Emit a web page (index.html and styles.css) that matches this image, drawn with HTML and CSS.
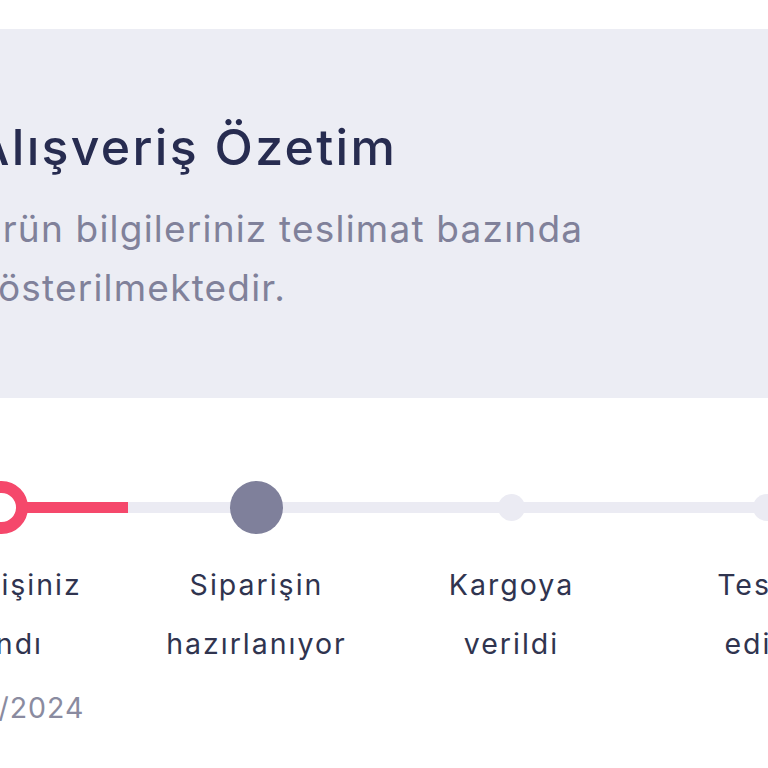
FILE: index.html
```html
<!DOCTYPE html>
<html lang="tr">
<head>
<meta charset="utf-8">
<title>Alışveriş Özetim</title>
<link rel="stylesheet" href="styles.css">
</head>
<body>
<div class="page">
  <div class="topbar"></div>
  <section class="summary">
    <div class="summary-inner">
      <h1 class="title">Alışveriş Özetim</h1>
      <p class="subtitle">Ürün bilgileriniz teslimat bazında<br>gösterilmektedir.</p>
    </div>
  </section>
  <section class="tracker">
    <div class="track">
      <div class="node node-done"><span class="dot dot-ring"></span></div>
      <div class="seg seg-half"></div>
      <div class="node"><span class="dot dot-current"></span></div>
      <div class="seg"></div>
      <div class="node"><span class="dot dot-small"></span></div>
      <div class="seg"></div>
      <div class="node"><span class="dot dot-small"></span></div>
      <div class="seg"></div>
    </div>
    <div class="labels">
      <div class="step">
        <div class="step-name">Siparişiniz<br>alındı</div>
        <div class="step-date">12/03/2024</div>
      </div>
      <div class="step">
        <div class="step-name">Siparişin<br>hazırlanıyor</div>
      </div>
      <div class="step">
        <div class="step-name">Kargoya<br>verildi</div>
      </div>
      <div class="step">
        <div class="step-name">Teslim<br>edildi</div>
      </div>
    </div>
  </section>
</div>
</body>
</html>
```
FILE: styles.css
```css
html, body {
  margin: 0;
  padding: 0;
  background: #ffffff;
}
body {
  width: 768px;
  height: 768px;
  overflow: hidden;
  font-family: Inter, "Noto Sans", sans-serif;
}
.page {
  width: 768px;
}
.topbar {
  height: 29px;
  background: #ffffff;
}
.summary {
  background: #ECEDF4;
  padding: 88px 0 81px 0;
}
.summary-inner {
  margin-left: -26px;
  width: 1000px;
}
.title {
  margin: 0;
  font-size: 50px;
  line-height: 60px;
  font-weight: 500;
  color: #272C50;
  letter-spacing: 2.3px;
  white-space: nowrap;
}
.subtitle {
  margin: 22px 0 0 0;
  font-size: 37px;
  line-height: 59px;
  font-weight: 400;
  color: #80819A;
  letter-spacing: 1.2px;
  white-space: nowrap;
}
.tracker {
  padding-top: 82px;
}
.track {
  display: flex;
  align-items: center;
  height: 54px;
  margin-left: -26px;
  width: 1100px;
}
.node {
  width: 54px;
  height: 54px;
  flex: none;
  display: flex;
  align-items: center;
  justify-content: center;
  background: linear-gradient(#EBEBF3, #EBEBF3) center / 100% 11px no-repeat;
}
.node-done {
  background: linear-gradient(#F5486B, #F5486B) center / 100% 11px no-repeat;
}
.seg {
  width: 201px;
  height: 11px;
  flex: none;
  background: #EBEBF3;
}
.seg-half {
  background: linear-gradient(to right, #F5486B 0 100px, #EBEBF3 100px 100%);
}
.dot {
  display: block;
  border-radius: 50%;
  box-sizing: border-box;
}
.dot-ring {
  width: 53px;
  height: 53px;
  border: 12px solid #F5486B;
  background: #ffffff;
}
.dot-current {
  width: 53px;
  height: 53px;
  background: #7F809B;
}
.dot-small {
  width: 27px;
  height: 27px;
  background: #EBEBF3;
}
.labels {
  display: grid;
  grid-template-columns: repeat(4, 255px);
  margin-left: -126px;
  margin-top: 21px;
  width: 1020px;
}
.step {
  text-align: center;
}
.step-name {
  font-size: 28.5px;
  line-height: 59px;
  color: #30344F;
  white-space: nowrap;
  letter-spacing: 2px;
}
.step-date {
  margin-top: 5px;
  font-size: 28.5px;
  line-height: 59px;
  color: #8A8BA0;
  letter-spacing: 1px;
}
```
